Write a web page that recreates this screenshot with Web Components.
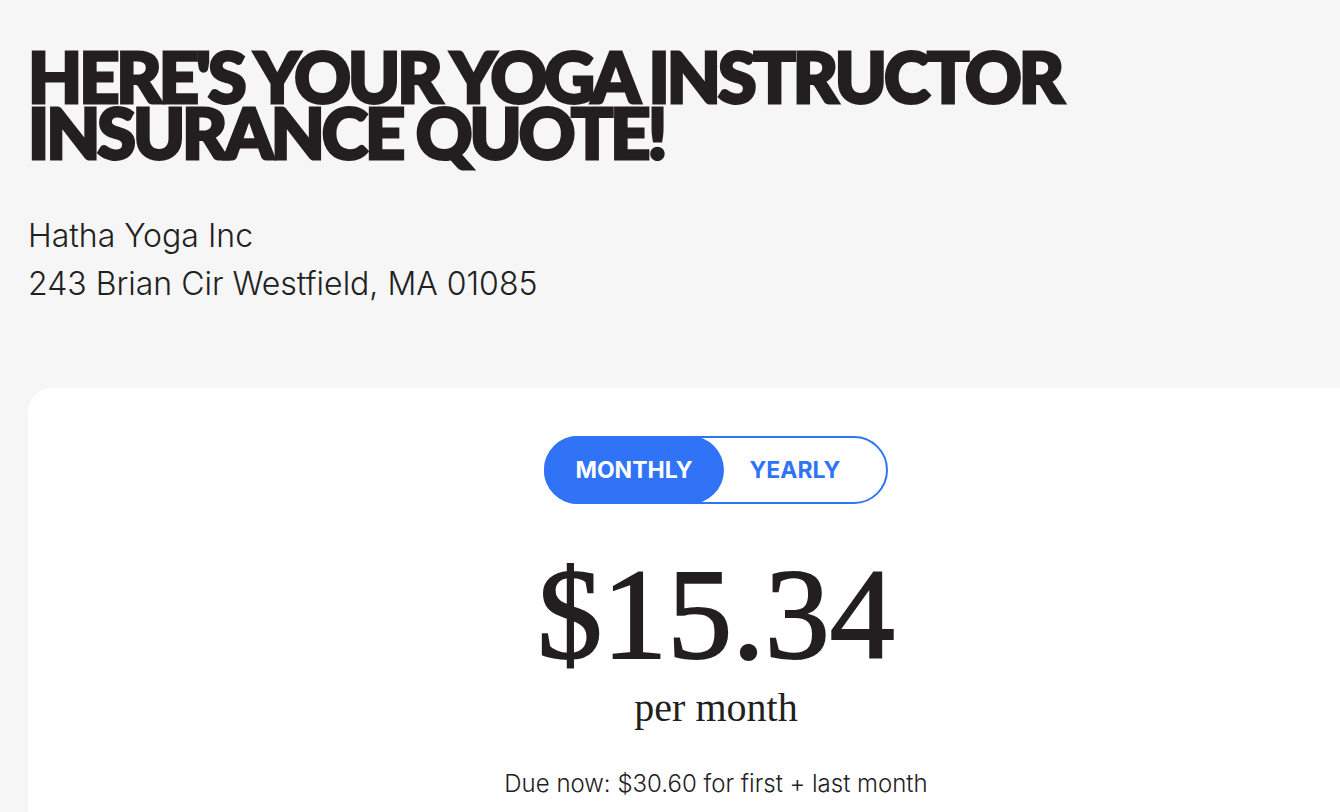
<!DOCTYPE html>
<html lang="en">
<head>
<meta charset="utf-8">
<title>Insurance quote</title>
<style>
html{background:#f6f6f6}
body{margin:0;color:#212121;font-family:Inter,"Liberation Sans",sans-serif}
</style>
</head>
<body>
<quote-page></quote-page>
<script>
const define=(name,html)=>customElements.define(name,class extends HTMLElement{
  constructor(){
    super();
    const t=document.createElement('template');
    t.innerHTML=html;
    this.attachShadow({mode:'open'}).append(t.content.cloneNode(true));
  }
});

define('quote-heading',`
<style>
:host{display:block}
h1{margin:0;color:#231f20;font:900 70px/56px Lato,sans-serif;letter-spacing:-3px;text-transform:uppercase;-webkit-text-stroke:3px #231f20}
</style>
<h1><slot></slot></h1>`);

define('business-details',`
<style>
:host{display:block;margin-top:52px;font-size:32px;font-weight:300;line-height:48px}
p{margin:0}
</style>
<p><slot name="name"></slot></p><p><slot name="address"></slot></p>`);

define('billing-toggle',`
<style>
:host{display:block}
fieldset{display:flex;box-sizing:border-box;width:344px;height:68px;margin:0;padding:0;border:2px solid #3073f6;border-radius:34px;background:#fff}
label{position:relative;display:flex;align-items:center;justify-content:center;color:#3073f6;font:700 23px/32px Inter,sans-serif;cursor:pointer}
label:first-of-type{width:180px;margin:-2px 0 -2px -2px}
label:last-of-type{width:142px}
input{position:absolute;opacity:0;inset:0;margin:0}
label:has(input:checked){background:#3073f6;color:#fff;border-radius:34px}
</style>
<fieldset aria-label="Billing period">
<label for="m"><input type="radio" id="m" name="period" checked>MONTHLY</label>
<label for="y"><input type="radio" id="y" name="period">YEARLY</label>
</fieldset>`);

define('quote-price',`
<style>
:host{display:block;color:#231f20;text-align:center;font-family:"Liberation Serif",serif}
p{margin:0}
.amount{font-size:130px;line-height:140px;-webkit-text-stroke:2px #231f20}
.period{font-size:40px;line-height:48px}
</style>
<p class="amount"><slot></slot></p>
<p class="period"><slot name="period"></slot></p>`);

define('quote-card',`
<style>
:host{display:flex;flex-direction:column;align-items:center;box-sizing:border-box;background:#fff;border-radius:24px 0 0 0;padding:48px 0 12px;margin-top:80px}
::slotted(quote-price){margin-top:40px}
::slotted(p){margin:36px 0 0;font-size:24px;font-weight:300;line-height:32px}
</style>
<slot></slot>`);

define('quote-page',`
<style>
:host{display:block;padding:48px 0 0 28px}
quote-card{padding-left:64px}
</style>
<quote-heading>Here's your yoga instructor<br>insurance quote!</quote-heading>
<business-details><span slot="name">Hatha Yoga Inc</span><span slot="address">243 Brian Cir Westfield, MA 01085</span></business-details>
<quote-card>
<billing-toggle></billing-toggle>
<quote-price>$15.34<span slot="period">per month</span></quote-price>
<p>Due now: $30.60 for first + last month</p>
</quote-card>`);
</script>
</body>
</html>
